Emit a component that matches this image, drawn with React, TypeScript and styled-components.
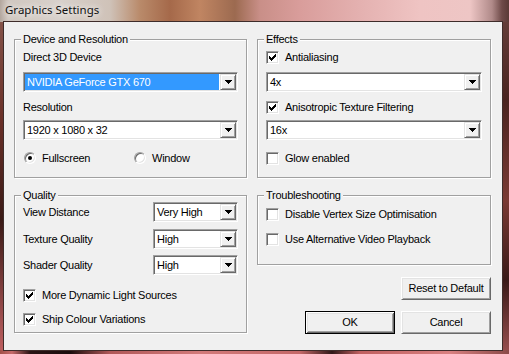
import React from "react";
import styled, { createGlobalStyle } from "styled-components";

const Global = createGlobalStyle`
  html, body { margin: 0; padding: 0; }
  body {
    width: 509px; height: 354px; overflow: hidden;
    font-family: "Liberation Sans", Arial, sans-serif;
    font-size: 11px; color: #000;
  }
  #root { width: 509px; height: 354px; }
`;

const Window = styled.div`
  width: 509px;
  height: 354px;
  box-sizing: border-box;
  display: flex;
  flex-direction: column;
  background:
    linear-gradient(to right, #b3a69d 0px, #d0c7c0 8px, #d8d1cb 60px, #cfc2b8 110px, #b98a6a 140px, #a5694a 170px, #c08562 200px, #9c6a50 235px, #c98f88 260px, #d99d9b 300px, #e4b1b0 360px, #efc4c3 420px, #eec6c5 470px, #b08a89 492px, #6e4a48 502px, #5a3a36 509px) top / 100% 22px no-repeat,
    linear-gradient(to right, #a05048 0px, #c66a6a 12px, #2a1414 30px, #1a0c0c 70px, #b05858 110px, #d27a7a 200px, #c46868 300px, #301818 332px, #c06060 360px, #d88080 450px, #8a4a48 509px) bottom / 100% 4px no-repeat,
    linear-gradient(to bottom, #8a5a50 0px, #6a3028 120px, #3a1a16 220px, #a05050 320px, #c06060 354px) left / 3px 100% no-repeat,
    linear-gradient(to bottom, #6a4440 0px, #4a2420 100px, #7a3a34 200px, #3a1a18 280px, #9a5050 354px) right / 7px 100% no-repeat,
    #f0f0f0;
`;

const TitleBar = styled.div`
  height: 21px;
  flex: none;
  padding: 2px 0 0 5px;
  box-sizing: border-box;
  font-family: "Noto Sans", "Open Sans", sans-serif;
  font-size: 11.5px;
  line-height: 15px;
  color: #111;
  text-shadow: 0 0 6px rgba(255, 255, 255, 0.9), 0 0 10px rgba(255, 255, 255, 0.7);
`;

const Client = styled.div`
  flex: 1;
  margin: 0 6px 3px 3px;
  border: 1px solid #3e2c2a;
  background: #f0f0f0;
  display: flex;
  gap: 10px;
  padding: 17px 0 0 10px;
  box-sizing: border-box;
  letter-spacing: -0.25px;
`;

const Column = styled.div<{ $w: number }>`
  width: ${(p) => p.$w}px;
  display: flex;
  flex-direction: column;
`;

const GroupBox = styled.section<{ $h: number; $mt?: number }>`
  height: ${(p) => p.$h}px;
  margin-top: ${(p) => p.$mt ?? 0}px;
  box-sizing: border-box;
  border: 1px solid #a0a0a0;
  box-shadow: inset 1px 1px 0 #fff, 1px 1px 0 #fff;
  padding: 0 8px;
  display: flex;
  flex-direction: column;
`;

const Legend = styled.div`
  margin: -7px 0 0 -2px;
  padding: 0 2px;
  align-self: flex-start;
  background: #f0f0f0;
  line-height: 13px;
  height: 13px;
`;

const Row = styled.div<{ $mt: number; $h?: number }>`
  margin-top: ${(p) => p.$mt}px;
  height: ${(p) => p.$h ?? 14}px;
  line-height: 14px;
  display: flex;
  align-items: center;
  white-space: nowrap;
`;

const FieldLabel = styled.span`
  flex: 1;
`;

const ComboBox = styled.div<{ $mt?: number; $w?: number }>`
  margin-top: ${(p) => p.$mt ?? 0}px;
  width: ${(p) => (p.$w ? `${p.$w}px` : "auto")};
  height: 20px;
  flex: none;
  box-sizing: border-box;
  border: 1px solid;
  border-color: #a0a0a0 #fff #fff #a0a0a0;
  box-shadow: inset 1px 1px 0 #696969, inset -1px -1px 0 #e3e3e3;
  background: #fff;
  padding: 1px;
  display: flex;
`;

const ComboValue = styled.div<{ $selected?: boolean }>`
  flex: 1;
  padding-left: 2px;
  line-height: 16px;
  height: 16px;
  background: ${(p) => (p.$selected ? "#3399ff" : "#fff")};
  color: ${(p) => (p.$selected ? "#fff" : "#000")};
  margin-right: 1px;
  overflow: hidden;
  white-space: nowrap;
`;

const DropButton = styled.div`
  width: 16px;
  height: 16px;
  box-sizing: border-box;
  border: 1px solid;
  border-color: #e3e3e3 #696969 #696969 #e3e3e3;
  box-shadow: inset 1px 1px 0 #fff, inset -1px -1px 0 #a0a0a0;
  background: #f0f0f0;
  display: flex;
  align-items: center;
  justify-content: center;
`;

const CheckBox = styled.span`
  width: 13px;
  height: 13px;
  flex: none;
  box-sizing: border-box;
  border: 1px solid;
  border-color: #a0a0a0 #fff #fff #a0a0a0;
  box-shadow: inset 1px 1px 0 #696969, inset -1px -1px 0 #e3e3e3;
  background: #fff;
  display: flex;
  align-items: center;
  justify-content: center;
  margin-right: 6px;
`;

const RadioItem = styled.span<{ $w?: number }>`
  display: flex;
  align-items: center;
  width: ${(p) => (p.$w ? `${p.$w}px` : "auto")};
`;

const RadioCircle = styled.span`
  width: 12px;
  height: 12px;
  flex: none;
  box-sizing: border-box;
  border-radius: 50%;
  border: 1px solid;
  border-color: #a0a0a0 #fff #fff #a0a0a0;
  box-shadow: inset 1px 1px 0 #696969, inset -1px -1px 0 #e3e3e3;
  background: #fff;
  display: flex;
  align-items: center;
  justify-content: center;
  margin: 0 6px 0 1px;
`;

const RadioDot = styled.span`
  width: 4px;
  height: 4px;
  border-radius: 50%;
  background: #000;
`;

const ButtonRow = styled.div<{ $mt: number }>`
  margin-top: ${(p) => p.$mt}px;
  display: flex;
  justify-content: flex-end;
  gap: 6px;
`;

const PushButton = styled.button<{ $default?: boolean }>`
  width: 90px;
  height: 23px;
  box-sizing: border-box;
  margin: 0;
  padding: 0;
  font: inherit;
  letter-spacing: inherit;
  color: #000;
  background: #f0f0f0;
  border: 1px solid;
  border-color: ${(p) => (p.$default ? "#000" : "#fff #696969 #696969 #fff")};
  box-shadow: ${(p) =>
    p.$default
      ? "inset 1px 1px 0 #fff, inset -1px -1px 0 #696969, inset 2px 2px 0 #e3e3e3, inset -2px -2px 0 #a0a0a0"
      : "inset 1px 1px 0 #e3e3e3, inset -1px -1px 0 #a0a0a0"};
  line-height: 21px;
`;

const CheckMark = () => (
  <svg width="7" height="7" viewBox="0 0 7 7" shapeRendering="crispEdges">
    {[2, 3, 4, 3, 2, 1, 0].map((y, x) => (
      <rect key={x} x={x} y={y} width="1" height="3" fill="#000" />
    ))}
  </svg>
);

const Arrow = () => (
  <svg width="7" height="4" viewBox="0 0 7 4" shapeRendering="crispEdges">
    <rect x="0" y="0" width="7" height="1" fill="#000" />
    <rect x="1" y="1" width="5" height="1" fill="#000" />
    <rect x="2" y="2" width="3" height="1" fill="#000" />
    <rect x="3" y="3" width="1" height="1" fill="#000" />
  </svg>
);

const Combo = ({ value, selected, mt, w }: { value: string; selected?: boolean; mt?: number; w?: number }) => (
  <ComboBox $mt={mt} $w={w}>
    <ComboValue $selected={selected}>{value}</ComboValue>
    <DropButton>
      <Arrow />
    </DropButton>
  </ComboBox>
);

const Check = ({ label, checked, mt }: { label: string; checked?: boolean; mt: number }) => (
  <Row $mt={mt}>
    <CheckBox>{checked && <CheckMark />}</CheckBox>
    {label}
  </Row>
);

const QualityRow = ({ label, value, mt }: { label: string; value: string; mt: number }) => (
  <Row $mt={mt} $h={20}>
    <FieldLabel>{label}</FieldLabel>
    <Combo value={value} w={85} />
  </Row>
);

export default function App() {
  return (
    <>
      <Global />
      <Window>
        <TitleBar>Graphics Settings</TitleBar>
        <Client>
          <Column $w={233}>
            <GroupBox $h={139}>
              <Legend>Device and Resolution</Legend>
              <Row $mt={4}>Direct 3D Device</Row>
              <Combo value="NVIDIA GeForce GTX 670" selected mt={8} />
              <Row $mt={8}>Resolution</Row>
              <Combo value="1920 x 1080 x 32" mt={6} />
              <Row $mt={11}>
                <RadioItem $w={110}>
                  <RadioCircle>
                    <RadioDot />
                  </RadioCircle>
                  Fullscreen
                </RadioItem>
                <RadioItem>
                  <RadioCircle />
                  Window
                </RadioItem>
              </Row>
            </GroupBox>
            <GroupBox $h={138} $mt={17}>
              <Legend>Quality</Legend>
              <QualityRow label="View Distance" value="Very High" mt={0} />
              <QualityRow label="Texture Quality" value="High" mt={7} />
              <QualityRow label="Shader Quality" value="High" mt={6} />
              <Check label="More Dynamic Light Sources" checked mt={13} />
              <Check label="Ship Colour Variations" checked mt={10} />
            </GroupBox>
          </Column>
          <Column $w={234}>
            <GroupBox $h={139}>
              <Legend>Effects</Legend>
              <Check label="Antialiasing" checked mt={4} />
              <Combo value="4x" mt={8} />
              <Check label="Anisotropic Texture Filtering" checked mt={8} />
              <Combo value="16x" mt={6} />
              <Check label="Glow enabled" mt={11} />
            </GroupBox>
            <GroupBox $h={70} $mt={17}>
              <Legend>Troubleshooting</Legend>
              <Check label="Disable Vertex Size Optimisation" mt={5} />
              <Check label="Use Alternative Video Playback" mt={11} />
            </GroupBox>
            <ButtonRow $mt={12}>
              <PushButton>Reset to Default</PushButton>
            </ButtonRow>
            <ButtonRow $mt={11}>
              <PushButton $default>OK</PushButton>
              <PushButton>Cancel</PushButton>
            </ButtonRow>
          </Column>
        </Client>
      </Window>
    </>
  );
}
